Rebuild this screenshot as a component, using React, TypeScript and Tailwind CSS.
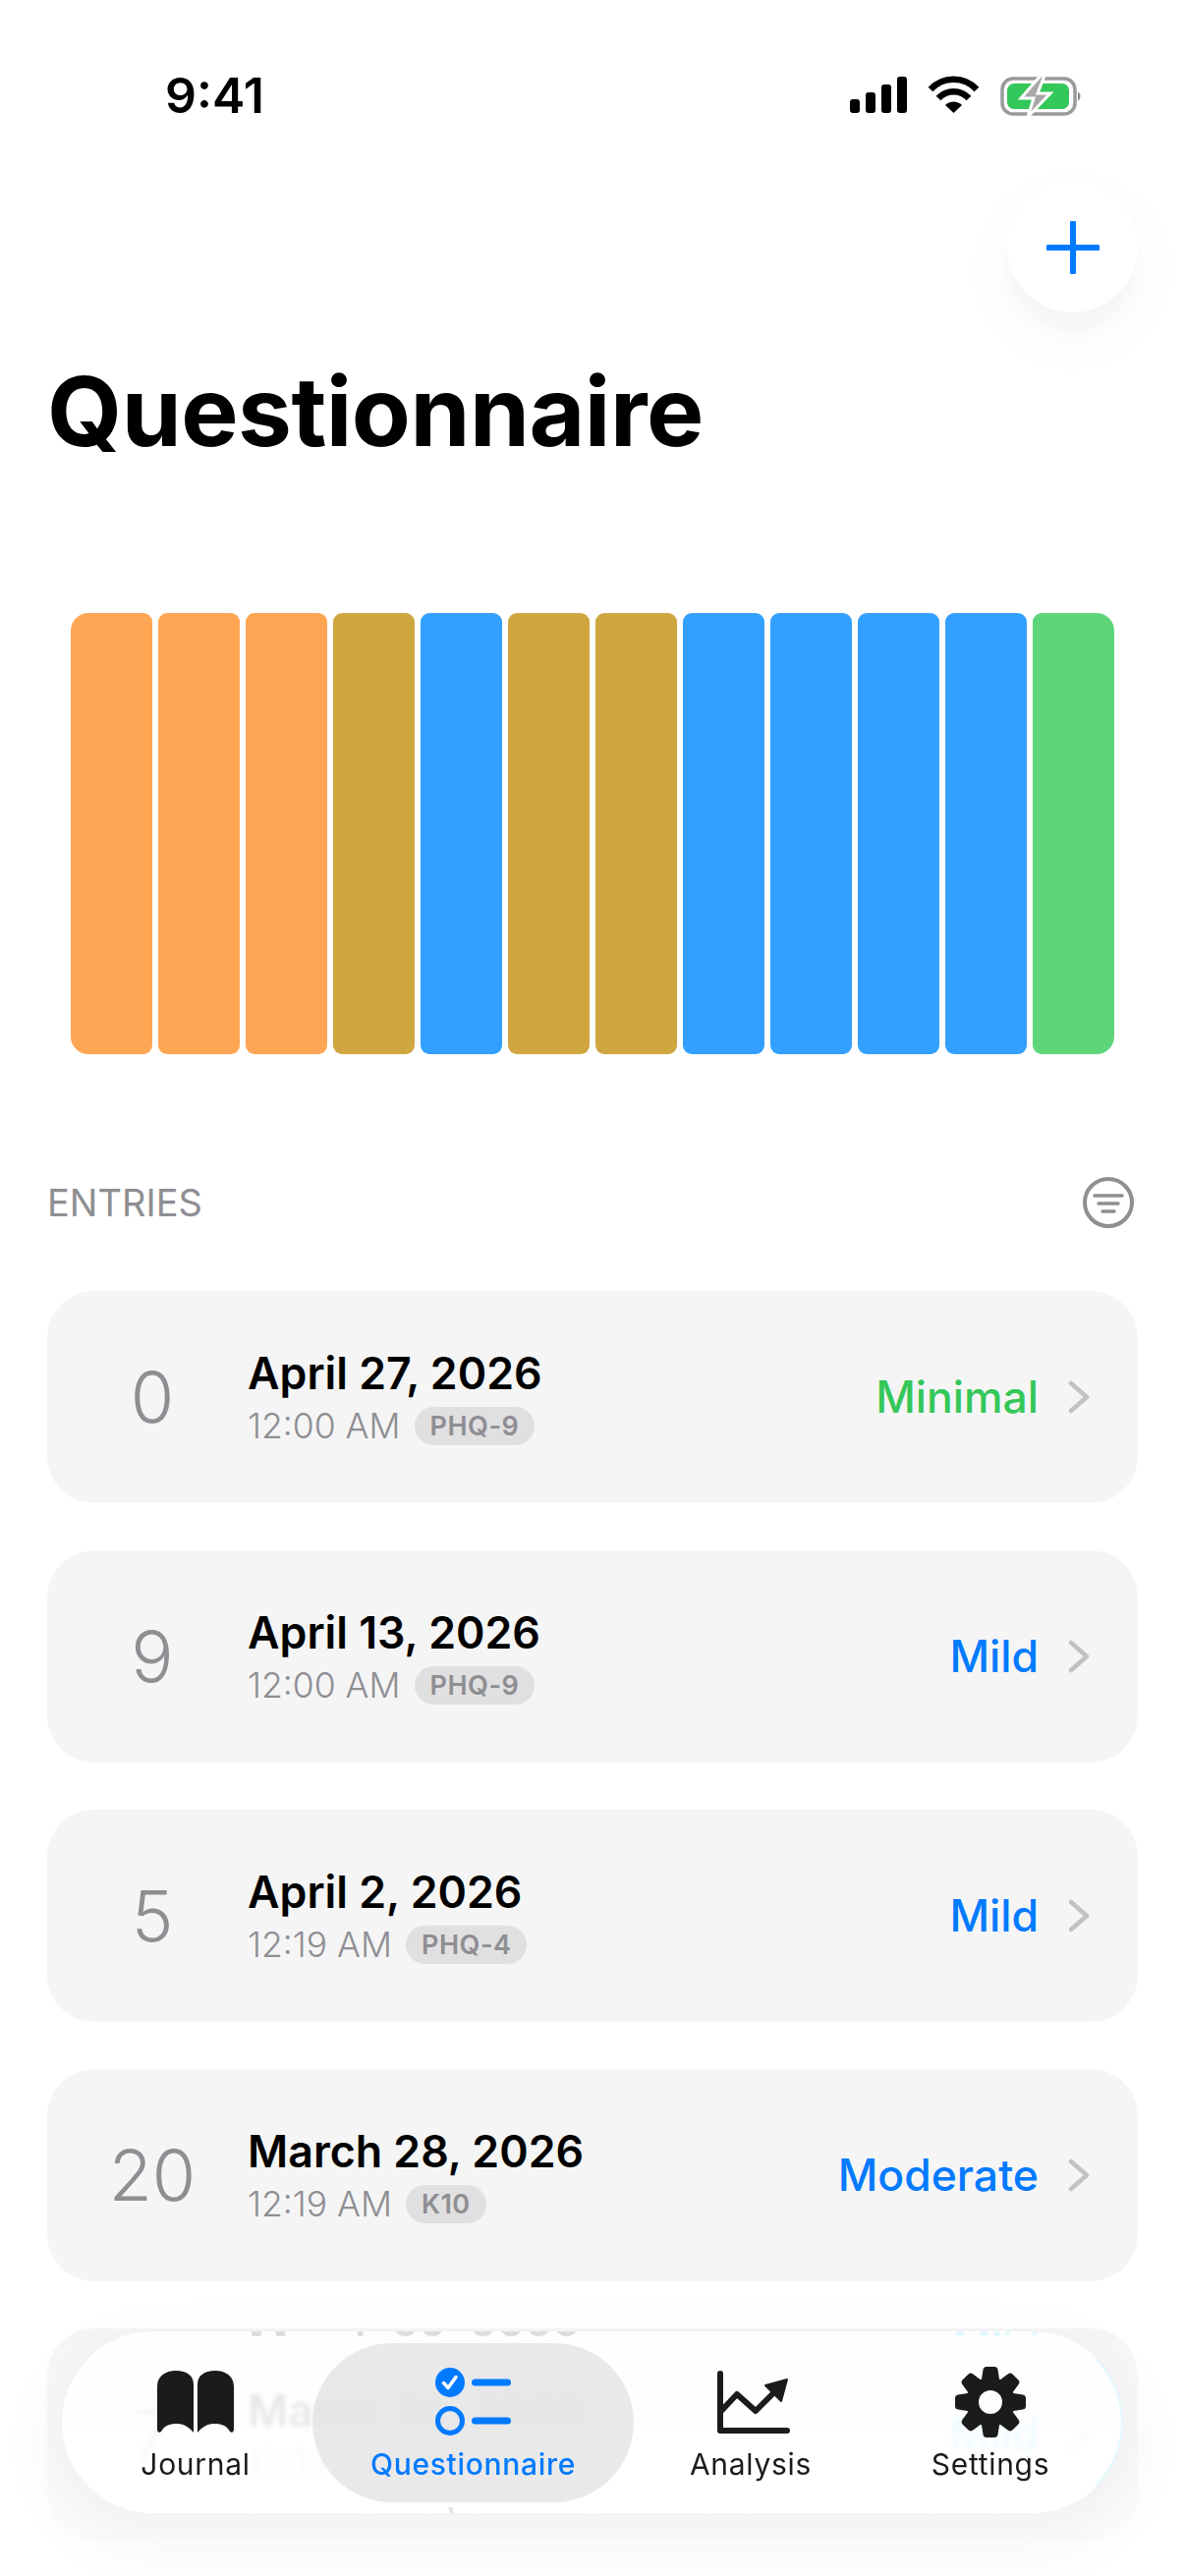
const bars = [
  "bg-[#ffa654]", "bg-[#ffa654]", "bg-[#ffa654]", "bg-[#cfa640]",
  "bg-[#33a0ff]", "bg-[#cfa640]", "bg-[#cfa640]", "bg-[#33a0ff]",
  "bg-[#33a0ff]", "bg-[#33a0ff]", "bg-[#33a0ff]", "bg-[#5fd57a]",
];

const entries = [
  { score: "0", date: "April 27, 2026", time: "12:00 AM", tag: "PHQ-9", level: "Minimal", color: "text-[#34c759]" },
  { score: "9", date: "April 13, 2026", time: "12:00 AM", tag: "PHQ-9", level: "Mild", color: "text-[#007aff]" },
  { score: "5", date: "April 2, 2026", time: "12:19 AM", tag: "PHQ-4", level: "Mild", color: "text-[#007aff]" },
  { score: "20", date: "March 28, 2026", time: "12:19 AM", tag: "K10", level: "Moderate", color: "text-[#007aff]" },
  // sits under the glass bar, which tints it pale cyan
  { score: "7", date: "March 22, 2026", time: "12:19 AM", tag: "K10", level: "Mild", color: "text-[#30d0ff]" },
];

function StatusBar() {
  return (
    <div className="flex h-[128px] items-end justify-between pl-[168px] pr-[105px]">
      <span className="mb-[1px] text-[50px] font-semibold leading-[60px] text-black">9:41</span>
      <svg width="236" height="44" viewBox="0 0 236 44" className="mb-[7px]">
        <rect x="0" y="24" width="10" height="14" rx="3" fill="#000" />
        <rect x="16" y="17" width="10" height="21" rx="3" fill="#000" />
        <rect x="32" y="9" width="10" height="29" rx="3" fill="#000" />
        <rect x="48" y="1" width="10" height="37" rx="3" fill="#000" />
        <path d="M82 14 a32 32 0 0 1 47 0" fill="none" stroke="#000" strokeWidth="6.5" />
        <path d="M90 23 a21 21 0 0 1 31 0" fill="none" stroke="#000" strokeWidth="6.5" />
        <path d="M105.500 38 L97 30 a12 12 0 0 1 17 0 Z" fill="#000" />
        <rect x="155" y="3" width="74" height="36" rx="11" fill="none" stroke="#9a9a9a" strokeWidth="3.5" />
        <rect x="160" y="8" width="63" height="26" rx="7" fill="#34c759" />
        <path d="M232 16 q5 5 0 10 Z" fill="#8a8a8a" />
        <path d="M194 0 L174 23 H187 L181 42 L204 18 H191 L198 0 Z" fill="#a8a8a8" stroke="#fff" strokeWidth="3" />
      </svg>
    </div>
  );
}

function ListIcon() {
  return (
    <svg width="77" height="69" viewBox="0 0 77 69">
      <circle cx="15" cy="15" r="15" fill="#007aff" />
      <path d="M8.500 15.500 L13 20.500 L21 9.500" fill="none" stroke="#fff" strokeWidth="3.5" strokeLinecap="round" strokeLinejoin="round" />
      <circle cx="15" cy="54" r="12.5" fill="none" stroke="#007aff" strokeWidth="5" />
      <rect x="37" y="11.500" width="40" height="7" rx="3.5" fill="#007aff" />
      <rect x="37" y="50.500" width="40" height="7" rx="3.5" fill="#007aff" />
    </svg>
  );
}

function BookIcon() {
  return (
    <svg width="78" height="63" viewBox="0 0 78 63" fill="#1a1c1a">
      <path d="M0 16 C0 6 8 0 19 0 C30 0 37 5 37 14 V63 C30 55 25 54 19 54 C13 54 7 56 4 62 L2 63 Q0 62 0 60 Z" />
      <path d="M78 16 C78 6 70 0 59 0 C48 0 41 5 41 14 V63 C48 55 53 54 59 54 C65 54 71 56 74 62 L76 63 Q78 62 78 60 Z" />
    </svg>
  );
}

function ChartIcon() {
  return (
    <svg width="74" height="64" viewBox="0 0 74 64" fill="none" className="translate-x-[3px]">
      <path d="M3 3 V61 H71" stroke="#1a1c1a" strokeWidth="6" strokeLinecap="round" strokeLinejoin="round" />
      <path d="M4 41 L20 24 L39 41 L60 20" stroke="#1a1c1a" strokeWidth="6" strokeLinejoin="round" />
      <path d="M49 15 L71 9 L65 31 Z" fill="#1a1c1a" stroke="#1a1c1a" strokeWidth="2" strokeLinejoin="round" />
    </svg>
  );
}

function GearIcon() {
  // eight teeth, one hole
  const teeth = [0, 45, 90, 135, 180, 225, 270, 315];
  return (
    <svg width="72" height="72" viewBox="0 0 72 72">
      <g fill="#1a1c1a">
        {teeth.map((a) => (
          <path key={a} d="M26 19 L28.500 3 Q29 0 32 0 H40 Q43 0 43.500 3 L46 19 Z" transform={`rotate(${a} 36 36)`} />
        ))}
        <circle cx="36" cy="36" r="25" />
      </g>
      <circle cx="36" cy="36" r="12" fill="#fdfdfd" />
    </svg>
  );
}

function TabItem({ label, icon, className }: { label: string; icon: React.ReactNode; className: string }) {
  return (
    <div className={`relative flex w-[130px] flex-col items-center pb-[6px] ${className}`}>
      <div className="flex h-[90px] items-center">{icon}</div>
      <span className="whitespace-nowrap text-[30px] leading-[36px] tracking-[0.7px] text-[#1a1c1a]">{label}</span>
    </div>
  );
}

function TabBar() {
  return (
    <div className="absolute inset-x-0 bottom-0 h-[282px] bg-gradient-to-b from-white/0 via-white/50 to-white/95">
      <div className="absolute left-[63px] top-[33px] flex h-[185px] w-[1080px] items-center overflow-hidden rounded-full pl-[71px] shadow-[0_24px_60px_16px_rgba(0,0,0,0.04)]">
        {/* glass */}
        <div className="absolute inset-0 rounded-full border-[2px] border-white border-r-[#dff8ff] bg-white/85 backdrop-blur-[2px]" />
        {/* refracted copies of the row underneath, along the top and bottom edges */}
        <span className="absolute -top-[37px] left-[190px] -scale-y-100 text-[44px] font-semibold leading-[52px] text-[#dcdcdc]">March 22, 2026</span>
        <span className="absolute -bottom-[44px] left-[190px] -scale-y-100 text-[44px] font-semibold leading-[52px] text-[#e4e4e4]">March 22, 2026</span>
        <span className="absolute -top-[38px] left-[906px] -scale-y-100 text-[44px] font-medium leading-[52px] text-[#dff8ff]">Mild</span>
        <span className="absolute -bottom-[42px] left-[906px] -scale-y-100 text-[44px] font-medium leading-[52px] text-[#dff8ff]">Mild</span>

        <TabItem label="Journal" icon={<BookIcon />} className="" />
        <div className="relative ml-[54px] flex h-[162px] w-[327px] flex-col items-center justify-center rounded-full bg-[#e0e0e0]/70 pb-[6px] backdrop-blur-[7px]">
          <div className="flex h-[90px] items-center"><ListIcon /></div>
          <span className="text-[30px] font-medium leading-[36px] tracking-[0.7px] text-[#007aff]">Questionnaire</span>
        </div>
        <TabItem label="Analysis" icon={<ChartIcon />} className="ml-[54px]" />
        <TabItem label="Settings" icon={<GearIcon />} className="ml-[114px]" />
      </div>
    </div>
  );
}

export default function App() {
  return (
    <div className="relative h-[2622px] w-[1206px] overflow-hidden bg-white font-['Inter',sans-serif]">
      <StatusBar />

      {/* Add button */}
      <div className="flex justify-end pr-[48px] pt-[57px]">
        <button className="flex h-[133px] w-[133px] items-center justify-center rounded-full bg-white shadow-[0_20px_12px_rgba(0,0,0,0.02),0_24px_70px_rgba(0,0,0,0.035)]">
          <svg width="54" height="54" viewBox="0 0 54 54">
            <path d="M27 2 V52 M2 27 H52" stroke="#007aff" strokeWidth="6" strokeLinecap="round" />
          </svg>
        </button>
      </div>

      <h1 className="mt-[39px] pl-[48px] text-[98px] font-bold leading-[124px] tracking-[-0.5px] text-black">Questionnaire</h1>

      {/* Score history */}
      <div className="mx-[72px] mt-[143px] flex h-[449px] gap-[6px] overflow-hidden rounded-[18px]">
        {bars.map((c, i) => (
          <div key={i} className={`w-[83px] rounded-[9px] ${c}`} />
        ))}
      </div>

      <div className="mt-[125px] flex items-center justify-between pl-[48px] pr-[52px]">
        <span className="text-[38px] leading-[52px] text-[#8e8e93]">ENTRIES</span>
        <svg width="52" height="52" viewBox="0 0 52 52" fill="none" stroke="#8e8e93" strokeLinecap="round">
          <circle cx="26" cy="26" r="24" strokeWidth="4" />
          <path d="M12 19 H40" strokeWidth="3.5" />
          <path d="M16 27 H36" strokeWidth="3.5" />
          <path d="M20 35 H32" strokeWidth="3.5" />
        </svg>
      </div>

      <div className="mt-[64px] flex flex-col gap-[48px] px-[48px]">
        {entries.map((e) => (
          <div key={e.date} className="flex h-[216px] shrink-0 items-center rounded-[48px] bg-[#f5f5f5] pr-[49px]">
            <span className="w-[204px] pl-[10px] text-center text-[72px] font-light leading-none text-[#8e8e93]">{e.score}</span>
            <div className="flex-1">
              <div className="text-[44.700px] font-[590] leading-[52px] text-black">{e.date}</div>
              <div className="mt-[7px] flex items-center gap-[14px]">
                <span className="text-[35.500px] font-light leading-[42px] text-[#8e8e93]">{e.time}</span>
                <span className="rounded-full bg-[#e0e0e0] px-[16px] text-[27px] font-semibold leading-[39px] tracking-[0.5px] text-[#8e8e93]">{e.tag}</span>
              </div>
            </div>
            <span className={`mr-[30px] text-[44.500px] font-medium leading-[52px] ${e.color}`}>{e.level}</span>
            <svg width="22" height="36" viewBox="0 0 22 36" fill="none">
              <path d="M3 4 L19 18 L3 32" stroke="#c2c2c2" strokeWidth="4.5" strokeLinecap="round" strokeLinejoin="round" />
            </svg>
          </div>
        ))}
      </div>

      <TabBar />
    </div>
  );
}
